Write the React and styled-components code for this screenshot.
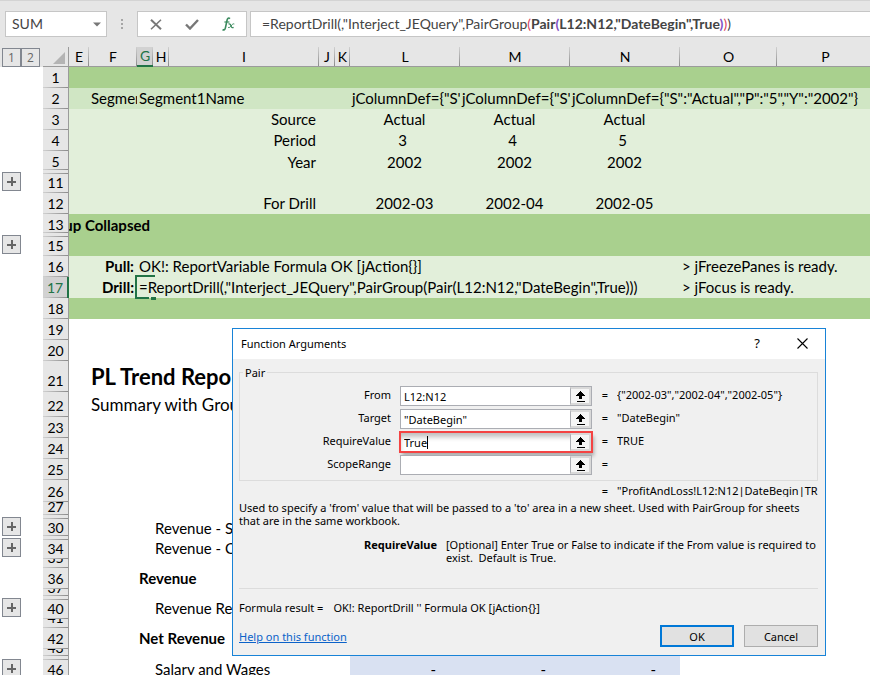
import React from 'react';
import styled, { createGlobalStyle, css } from 'styled-components';

const Global = createGlobalStyle`
  *, *::before, *::after { box-sizing: border-box; }
  html, body { margin: 0; background: #fff; overflow: hidden; }
  body { font-family: Lato, "Open Sans", sans-serif; font-size: 15px; color: #000; }
  button, input { font: inherit; color: inherit; margin: 0; border-radius: 0; }
`;

const Workbook = styled.main`
  position: relative;
  height: 100vh;
  overflow: hidden;
`;

/* ---------- formula bar ---------- */

const Bar = styled.header`
  display: flex;
  height: 47px;
  padding: 10px 0 10px 5px;
  background: #e6e6e6;
  border-top: 1px solid #d4d4d4;
  color: #444;
  font-size: 14px;
`;

const BarBox = styled.div`
  display: flex;
  align-items: center;
  height: 26px;
  background: #fff;
  border: 1px solid #c6c6c6;
`;

const NameBox = styled(BarBox)`
  width: 102px;
`;

const NameInput = styled.input`
  flex: 1;
  min-width: 0;
  padding: 0 0 1px 6px;
  border: 0;
  background: none;
  outline: none;
`;

const IconButton = styled.button`
  display: grid;
  place-items: center;
  flex: ${(p) => (p.$wide ? '1' : '0 0 19px')};
  height: 100%;
  padding: 0;
  border: 0;
  background: none;
`;

const Grip = styled.span`
  display: grid;
  place-items: center;
  width: 30px;
`;

const Actions = styled(BarBox)`
  width: 110px;
`;

const FormulaBox = styled(BarBox)`
  flex: 1;
  min-width: 0;
  margin-left: 3px;
  padding: 0 0 2px 11px;
  border-right: 0;
  white-space: nowrap;
  overflow: hidden;
`;

const Paren = styled.span`
  color: ${(p) => p.$color};
`;

/* ---------- sheet ---------- */

const Table = styled.table`
  width: 100%;
  min-width: 874px;
  table-layout: fixed;
  border-collapse: separate;
  border-spacing: 0;
  th, td { padding: 0; font-weight: inherit; }
`;

const Col = styled.col`
  width: ${(p) => (p.$w ? p.$w + 'px' : 'auto')};
`;

const LevelCell = styled.th`
  background: #e6e6e6;
  text-align: left;
`;

const Levels = styled.div`
  display: flex;
  padding-left: 2px;
`;

const OutlineButton = styled.button`
  display: grid;
  place-items: center;
  flex: none;
  width: 19px;
  height: 19px;
  padding: 0;
  border: 1px solid #828790;
  background: #e6e6e6;
  color: #666;
  font: 12px "Open Sans", sans-serif;
`;

const Corner = styled.th`
  background: #e6e6e6;
  border-bottom: 1px solid #9b9b9b;
  border-right: 1px solid #9b9b9b;
`;

const CornerMark = styled.div`
  display: flex;
  justify-content: flex-end;
  padding: 2px 3px 0 0;
`;

const ColumnHead = styled.th`
  height: 20px;
  background: linear-gradient(#d0d0d0, #8c8c8c) right / 1px 100% no-repeat #e6e6e6;
  border-bottom: 1px solid #9b9b9b;
  font-size: 14px;
  line-height: 18px;
  ${(p) => p.$active && css`
    background-color: #d2d2d2;
    border-bottom: 2px solid #217346;
    color: #217346;
  `}
`;

const Row = styled.tr`
  background: ${(p) => p.$bg || '#fff'};
`;

const Gutter = styled.td`
  background: #fff;
`;

const GutterBox = styled.div`
  display: flex;
  align-items: flex-end;
  height: ${(p) => p.$h}px;
  padding: 0 0 ${(p) => (p.$tight ? 0 : 2)}px 2px;
`;

const RowHead = styled.th`
  background: linear-gradient(90deg, #d0d0d0, #8c8c8c) bottom / 100% 1px no-repeat #e6e6e6;
  border-right: 1px solid #9b9b9b;
  font-size: 14px;
  ${(p) => p.$active && css`
    background-color: #d2d2d2;
    border-right: 2px solid #217346;
    color: #217346;
  `}
`;

const Cell = styled.td`
  position: ${(p) => (p.$active ? 'relative' : 'static')};
  background: ${(p) => p.$fill || 'transparent'};
`;

const Text = styled.div`
  display: flex;
  align-items: flex-end;
  justify-content: ${(p) => p.$align || 'flex-start'};
  height: ${(p) => p.$h}px;
  padding: 0 ${(p) => p.$padRight || 3}px ${(p) => (p.$tight ? 1 : 2)}px 2px;
  line-height: ${(p) => p.$line || 18}px;
  font-size: ${(p) => p.$size || 'inherit'};
  font-weight: ${(p) => (p.$bold ? 700 : 400)};
  white-space: pre;
  overflow: ${(p) => (p.$clip ? 'hidden' : 'visible')};
`;

const HeadText = styled(Text)`
  padding: 0 0 1px;
  justify-content: center;
  overflow: hidden;
`;

const ActiveFrame = styled.span`
  position: absolute;
  left: -2px;
  top: -2px;
  width: 20px;
  height: 24px;
  border-left: 2px solid #217346;
  border-top: 2px solid #217346;
  &::before {
    content: '';
    position: absolute;
    left: 0;
    bottom: 0;
    width: 12px;
    height: 2px;
    background: #217346;
  }
  &::after {
    content: '';
    position: absolute;
    right: -1px;
    bottom: -1px;
    width: 5px;
    height: 3px;
    background: #217346;
  }
`;

const GREEN = '#a9d08e';
const PALE = '#e2efda';
const BLUE = '#d9e1f2';

const COLUMNS = [
  ['E', 20], ['F', 48], ['G', 16], ['H', 16], ['I', 150], ['J', 16], ['K', 15],
  ['L', 110], ['M', 110], ['N', 110], ['O', 97], ['P', 0],
];

const mid = (t) => ({ t, align: 'center' });
const right = (t) => ({ t, align: 'flex-end' });
const boldRight = (t) => ({ t, align: 'flex-end', bold: true });
const dash = { t: '-', align: 'flex-end', fill: BLUE, padRight: 24 };
const filled = { t: '', fill: BLUE };

const ROWS = [
  { n: 1, h: 21, bg: GREEN },
  { n: 2, h: 21, bg: '#d0e6c4', cells: {
    F: { t: 'Segment1', clip: true }, G: { t: 'Segment1Name' },
    L: { t: 'jColumnDef={"S":"Actual"', clip: true },
    M: { t: 'jColumnDef={"S":"Actual"', clip: true },
    N: { t: 'jColumnDef={"S":"Actual","P":"5","Y":"2002"}' } } },
  { n: 3, h: 21, bg: PALE, cells: { I: right('Source'), L: mid('Actual'), M: mid('Actual'), N: mid('Actual') } },
  { n: 4, h: 21, bg: PALE, cells: { I: right('Period'), L: mid('3 '), M: mid('4 '), N: mid('5 ') } },
  { n: 5, h: 19, bg: PALE, tight: true, cells: { I: right('Year'), L: mid('2002'), M: mid('2002'), N: mid('2002') } },
  { h: 4, bg: PALE },
  { n: 11, h: 19, bg: PALE, plus: true },
  { n: 12, h: 21, bg: PALE, cells: { I: right('For Drill'), L: mid('2002-03'), M: mid('2002-04'), N: mid('2002-05') } },
  { n: 13, h: 19, bg: GREEN, tight: true, cells: { E: { t: 'Group Collapsed', bold: true, clip: true, align: 'flex-end', span: 3 } } },
  { h: 4, bg: GREEN },
  { n: 15, h: 19, bg: GREEN, plus: true },
  { n: 16, h: 21, bg: PALE, cells: {
    F: boldRight('Pull:'), G: { t: 'OK!: ReportVariable Formula OK [jAction{}]' }, O: { t: '> jFreezePanes is ready.' } } },
  { n: 17, h: 21, bg: PALE, active: true, cells: {
    F: boldRight('Drill:'),
    G: { t: '=ReportDrill(,"Interject_JEQuery",PairGroup(Pair(L12:N12,"DateBegin",True)))', active: true },
    O: { t: '> jFocus is ready.' } } },
  { n: 18, h: 21, bg: GREEN },
  { n: 19, h: 21 },
  { n: 20, h: 21 },
  { n: 21, h: 31, line: 20, cells: { F: { t: 'PL Trend Report', bold: true, size: '22px', line: 26 } } },
  { n: 22, h: 25, line: 20, cells: { F: { t: 'Summary with Groups', size: '17px', line: 20 } } },
  { n: 23, h: 21 },
  { n: 24, h: 21 },
  { n: 25, h: 21 },
  { n: 26, h: 22 },
  { n: 27, h: 13, tight: true },
  { h: 4 },
  { n: 30, h: 17, tight: true, plus: true, cells: { H: { t: 'Revenue - Services' } } },
  { h: 4 },
  { n: 34, h: 19, plus: true, cells: { H: { t: 'Revenue - Consulting' } } },
  { n: 35, h: 9 },
  { n: 36, h: 21, cells: { G: { t: 'Revenue', bold: true } } },
  { n: 37, h: 7, tight: true },
  { h: 4 },
  { n: 40, h: 19, plus: true, cells: { H: { t: 'Revenue Reductions' } } },
  { n: 41, h: 9 },
  { n: 42, h: 21, cells: { G: { t: 'Net Revenue', bold: true } } },
  { n: 43, h: 7, tight: true },
  { h: 4, cells: { L: filled, M: filled, N: filled } },
  { n: 46, h: 20, plus: true, cells: { H: { t: 'Salary and Wages' }, L: dash, M: dash, N: dash } },
];

const Plus = () => (
  <svg width="9" height="9" viewBox="0 0 9 9" aria-hidden="true">
    <path d="M4 0h2v4h3v2H6v3H4V6H0V4h4z" fill="#666" />
  </svg>
);

function SheetRow({ row }) {
  const cells = row.cells || {};
  const out = [];
  for (let i = 0; i < COLUMNS.length; i += 1) {
    const name = COLUMNS[i][0];
    const c = cells[name];
    out.push(
      <Cell key={name} colSpan={c?.span} $active={c?.active} $fill={c?.fill}>
        {c && c.active && <ActiveFrame />}
        {c && (
          <Text
            $h={row.h} $tight={row.tight} $line={c.line || (row.tight ? 14 : 18)} $size={c.size}
            $bold={c.bold} $align={c.align} $padRight={c.padRight} $clip={c.clip}
          >
            <span>{c.t}</span>
          </Text>
        )}
      </Cell>
    );
    if (c?.span) i += c.span - 1;
  }
  return (
    <Row $bg={row.bg}>
      <Gutter>
        <GutterBox $h={row.h} $tight={row.tight}>
          {row.plus && <OutlineButton aria-label={`Expand group above row ${row.n}`}><Plus /></OutlineButton>}
        </GutterBox>
      </Gutter>
      <RowHead scope="row" $active={row.active}>
        <HeadText $h={row.h} $line={row.line || (row.tight ? 14 : 18)}>{row.n}</HeadText>
      </RowHead>
      {out}
    </Row>
  );
}

function Sheet() {
  return (
    <Table>
      <colgroup>
        <Col $w={43} />
        <Col $w={26} />
        {COLUMNS.map(([n, w]) => <Col key={n} $w={w} />)}
      </colgroup>
      <thead>
        <tr>
          <LevelCell>
            <Levels>
              <OutlineButton>1</OutlineButton>
              <OutlineButton>2</OutlineButton>
            </Levels>
          </LevelCell>
          <Corner aria-label="Select all">
            <CornerMark>
              <svg width="12" height="12" viewBox="0 0 12 12">
                <path d="M12 0v12H0z" fill="#b4b4b4" />
              </svg>
            </CornerMark>
          </Corner>
          {COLUMNS.map(([n]) => <ColumnHead key={n} scope="col" $active={n === 'G'}>{n}</ColumnHead>)}
        </tr>
      </thead>
      <tbody>
        {ROWS.map((r, i) => <SheetRow key={i} row={r} />)}
      </tbody>
    </Table>
  );
}

/* ---------- dialog ---------- */

const Dialog = styled.section`
  position: absolute;
  left: 232px;
  top: 328px;
  width: 594px;
  background: #f0f0f0;
  border: 1px solid #1883d7;
  font: 11px/13px "Noto Sans", "Open Sans", sans-serif;
`;

const TitleBar = styled.div`
  display: flex;
  align-items: center;
  height: 30px;
  padding: 0 8px 2px;
  background: #fff;
`;

const DialogTitle = styled.h1`
  flex: 1;
  margin: 0;
  font-size: 11px;
  font-weight: 400;
`;

const TitleButton = styled.button`
  display: grid;
  place-items: center;
  width: ${(p) => (p.$close ? 30 : 60)}px;
  height: 28px;
  padding: 0;
  border: 0;
  background: none;
  font-size: 13px;
`;

const Body = styled.div`
  padding: 7px 7px 8px 6px;
`;

const Group = styled.fieldset`
  min-width: 0;
  margin: 0;
  padding: 7px 0 2px;
  border: 1px solid #dcdcdc;
`;

const Legend = styled.legend`
  margin-left: 3px;
  padding: 0 2px;
`;

const ArgRow = styled.div`
  display: grid;
  grid-template-columns: 160px 192px 25px 1fr;
  align-items: start;
  height: 20px;
  margin-bottom: 3px;
  line-height: 18px;
`;

const ArgLabel = styled.label`
  padding-right: 9px;
  text-align: right;
`;

const Field = styled.div`
  position: relative;
  display: flex;
  height: 20px;
  border: 1px solid #abadb3;
  background: #fff;
  ${(p) => p.$marked && css`
    outline: 2px solid #f44343;
    outline-offset: -1px;
    box-shadow: 2px 4px 4px rgba(0, 0, 0, 0.3), inset 0 5px 5px -1px rgba(0, 0, 0, 0.25);
  `}
`;

const FieldInput = styled.input`
  flex: 1;
  min-width: 0;
  padding: 1px 3px 0;
  border: 0;
  background: none;
  outline: none;
`;

const Caret = styled.span`
  position: absolute;
  left: 26px;
  top: 3px;
  width: 1px;
  height: 13px;
  background: #000;
`;

const PickButton = styled.button`
  display: grid;
  place-items: center;
  width: 21px;
  padding: 0;
  border: 2px solid #d9d9d9;
  border-left: 1px solid #abadb3;
  background: #f5f5f5;
`;

const Equals = styled.span`
  padding-left: 1px;
  text-align: center;
`;

const Value = styled.span`
  white-space: nowrap;
  overflow: hidden;
`;

const ResultRow = styled.div`
  display: grid;
  grid-template-columns: 25px 201px;
  justify-content: end;
  padding: 3px 0 4px;
`;

const Description = styled.p`
  margin: 0;
`;

const ArgHelp = styled.div`
  display: grid;
  grid-template-columns: 198px 1fr;
  column-gap: 9px;
  height: 50px;
  margin-top: 11px;
`;

const ArgName = styled.b`
  text-align: right;
`;

const Rule = styled.hr`
  margin: 0;
  border: 0;
  border-top: 1px solid #dcdcdc;
`;

const FormulaResult = styled.div`
  display: flex;
  gap: 10px;
  padding: 12px 0 11px;
`;

const Footer = styled.div`
  display: flex;
  align-items: center;
  gap: 10px;
`;

const HelpLink = styled.a`
  flex: 1;
  color: #0b62c9;
`;

const PushButton = styled.button`
  width: 74px;
  height: 22px;
  padding: 0;
  border: ${(p) => (p.$primary ? '2px solid #0078d7' : '1px solid #adadad')};
  background: #e1e1e1;
`;

const ARGS = [
  ['From', 'L12:N12', '{"2002-03","2002-04","2002-05"}'],
  ['Target', '"DateBegin"', '"DateBegin"'],
  ['RequireValue', 'True', 'TRUE', true],
  ['ScopeRange', '', ''],
];

function Argument({ name, value, result, marked }) {
  const id = `arg-${name}`;
  return (
    <ArgRow>
      <ArgLabel htmlFor={id}>{name}</ArgLabel>
      <Field $marked={marked}>
        <FieldInput id={id} defaultValue={value} />
        {marked && <Caret />}
        <PickButton aria-label={`Select range for ${name}`}>
          <svg width="9" height="11" viewBox="0 0 9 11" aria-hidden="true">
            <path d="M4 0h1v1h1v1h1v1h1v1h1v1H6v3H3V5H0V4h1V3h1V2h1V1h1zM1 10h8v1H1z" fill="#000" />
          </svg>
        </PickButton>
      </Field>
      <Equals>=</Equals>
      <Value>{result}</Value>
    </ArgRow>
  );
}

function FunctionDialog() {
  return (
    <Dialog role="dialog" aria-labelledby="dlg-title">
      <TitleBar>
        <DialogTitle id="dlg-title">Function Arguments</DialogTitle>
        <TitleButton>?</TitleButton>
        <TitleButton $close aria-label="Close">
          <svg width="11" height="11" viewBox="0 0 11 11" aria-hidden="true">
            <path d="M0.5 0.5l10 10M10.5 0.5l-10 10" stroke="#000" strokeWidth="1.1" />
          </svg>
        </TitleButton>
      </TitleBar>
      <Body>
        <Group>
          <Legend>Pair</Legend>
          {ARGS.map(([name, value, result, marked]) => (
            <Argument key={name} name={name} value={value} result={result} marked={marked} />
          ))}
        </Group>
        <ResultRow>
          <Equals>=</Equals>
          <Value>"ProfitAndLoss!L12:N12|DateBegin|TRU</Value>
        </ResultRow>
        <Description>
          Used to specify a 'from' value that will be passed to a 'to' area in a new sheet. Used with PairGroup for sheets
          that are in the same workbook.
        </Description>
        <ArgHelp>
          <ArgName>RequireValue</ArgName>
          <span>{'[Optional] Enter True or False to indicate if the From value is required to exist. \u00a0Default is True.'}</span>
        </ArgHelp>
        <Rule />
        <FormulaResult>
          <span>Formula result =</span>
          <span>OK!: ReportDrill '' Formula OK [jAction{'{}'}]</span>
        </FormulaResult>
        <Footer>
          <HelpLink href="#help">Help on this function</HelpLink>
          <PushButton $primary>OK</PushButton>
          <PushButton>Cancel</PushButton>
        </Footer>
      </Body>
    </Dialog>
  );
}

function FormulaBar() {
  return (
    <Bar>
      <NameBox>
        <NameInput aria-label="Name box" defaultValue="SUM" />
        <IconButton aria-label="Show names">
          <svg width="8" height="5" viewBox="0 0 8 5"><path d="M0 0.5h8L4 4.5z" fill="#777" /></svg>
        </IconButton>
      </NameBox>
      <Grip>
        <svg width="2" height="10" viewBox="0 0 2 10"><path d="M0 0h2v2H0zM0 4h2v2H0zM0 8h2v2H0z" fill="#a6a6a6" /></svg>
      </Grip>
      <Actions>
        <IconButton $wide aria-label="Cancel entry">
          <svg width="12" height="11" viewBox="0 0 12 11" fill="none" stroke="#777">
            <path d="M1 0.8L11 10.2" strokeWidth="2" /><path d="M11 0.8L1 10.2" strokeWidth="1.5" />
          </svg>
        </IconButton>
        <IconButton $wide aria-label="Enter">
          <svg width="14" height="11" viewBox="0 0 14 11"><path d="M1 5.5L5 9.5L13 1" fill="none" stroke="#777" strokeWidth="2.4" /></svg>
        </IconButton>
        <IconButton $wide aria-label="Insert function">
          <svg width="13" height="14" viewBox="0 0 13 14" fill="none" stroke="#3b8a5e">
            <path d="M8 1.6C6.6 0.4 5.5 1.2 5.1 3L3.4 10.8C3 12.8 1.8 13.4 0.6 12.5" strokeWidth="1.6" />
            <path d="M2.4 5h5" strokeWidth="1.2" />
            <path d="M6.4 7c1.6-0.6 2.2 0.4 2.6 1.9s1.2 2.2 2.6 1.5" strokeWidth="1.3" />
            <path d="M12.3 7c-1.2-0.6-2.2 0.6-3.2 1.9s-1.8 2-3 1.5" strokeWidth="1" />
          </svg>
        </IconButton>
      </Actions>
      <FormulaBox role="textbox" aria-label="Formula bar">
        <span>
          =ReportDrill(,"Interject_JEQuery",PairGroup<Paren $color="#d9455f">(</Paren>
          <b>Pair<Paren $color="#8250c4">(</Paren>L12:N12,"DateBegin",True<Paren $color="#8250c4">)</Paren></b>
          <Paren $color="#d9455f">)</Paren>)
        </span>
      </FormulaBox>
    </Bar>
  );
}

export default function App() {
  return (
    <Workbook>
      <Global />
      <FormulaBar />
      <Sheet />
      <FunctionDialog />
    </Workbook>
  );
}
